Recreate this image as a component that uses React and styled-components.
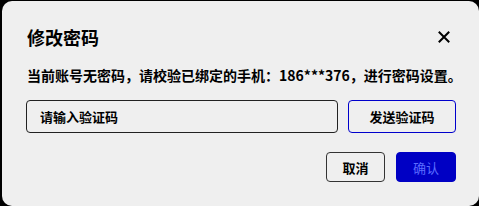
import React from "react";
import styled, { createGlobalStyle } from "styled-components";

const GlobalStyle = createGlobalStyle`
  html, body {
    margin: 0;
    padding: 0;
    background: #000;
  }
  body {
    font-family: "Noto Sans CJK SC", "Noto Sans", sans-serif;
  }
`;

const Dialog = styled.div`
  box-sizing: border-box;
  margin: 1px 0 0 2px;
  width: 477px;
  height: 205px;
  background: #efefef;
  border-radius: 10px;
  padding: 24px 23px 0 24px;
  display: flex;
  flex-direction: column;
`;

const Header = styled.div`
  display: flex;
  align-items: center;
  justify-content: space-between;
  height: 24px;
`;

const Title = styled.div`
  font-size: 18px;
  font-weight: 700;
  color: #000;
  padding-left: 1px;
`;

const Close = styled.button`
  border: none;
  background: none;
  padding: 0;
  width: 14px;
  height: 14px;
  margin-right: 5px;
  display: flex;
  align-items: center;
  justify-content: center;
  cursor: pointer;
`;

const Desc = styled.p`
  margin: 18px 0 0 1px;
  font-size: 14px;
  font-weight: 700;
  line-height: 16px;
  color: #000;
  white-space: nowrap;
`;

const Row = styled.div`
  display: flex;
  gap: 10px;
  margin-top: 17px;
`;

const Input = styled.input`
  box-sizing: border-box;
  width: 312px;
  height: 33px;
  border: 1px solid #222;
  border-radius: 4px;
  background: #efefef;
  padding: 0 13px;
  font-family: inherit;
  font-size: 13px;
  font-weight: 700;
  outline: none;
  &::placeholder {
    color: #000;
  }
`;

const Button = styled.button`
  box-sizing: border-box;
  height: ${(p) => p.$h}px;
  width: ${(p) => p.$w}px;
  border-radius: 4px;
  font-family: inherit;
  font-size: 13px;
  font-weight: ${(p) => (p.$primary ? 400 : 700)};
  border: 1px solid ${(p) => (p.$primary ? "#0000c4" : p.$blue ? "#0000cc" : "#333")};
  background: ${(p) => (p.$primary ? "#0000c4" : "#efefef")};
  color: ${(p) => (p.$primary ? "#5a6bff" : "#000")};
  padding: 0;
  cursor: pointer;
`;

const Footer = styled.div`
  display: flex;
  justify-content: flex-end;
  gap: 11px;
  margin-top: 19px;
`;

export default function App() {
  return (
    <>
      <GlobalStyle />
      <Dialog>
        <Header>
          <Title>修改密码</Title>
          <Close aria-label="close">
            <svg width="12" height="12" viewBox="0 0 12 12">
              <path d="M1.5 1.5L10.5 10.5M10.5 1.5L1.5 10.5" stroke="#000" strokeWidth="2" strokeLinecap="square" />
            </svg>
          </Close>
        </Header>
        <Desc>当前账号无密码，请校验已绑定的手机：186***376，进行密码设置。</Desc>
        <Row>
          <Input placeholder="请输入验证码" />
          <Button $blue $w={108} $h={33}>发送验证码</Button>
        </Row>
        <Footer>
          <Button $w={59} $h={30}>取消</Button>
          <Button $primary $w={60} $h={30}>确认</Button>
        </Footer>
      </Dialog>
    </>
  );
}
